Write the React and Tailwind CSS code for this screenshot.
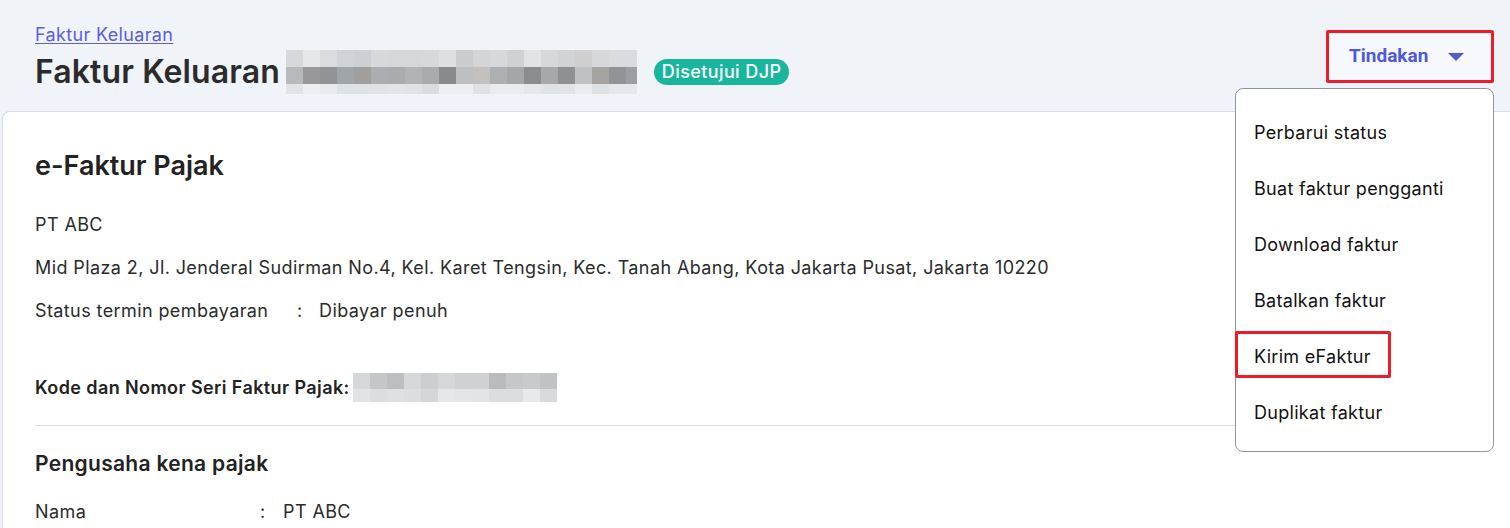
import React from "react";

const mosaicTop = ["#d6d9dc","#e5e7ea","#dadcdf","#cfd2d6","#cdd0d3","#d6d9dc","#d5d8db","#d5d8db","#d6d9dc","#dde0e2","#cbcccd","#d3d6d8","#d6d8db","#cfd2d5","#e1e3e6","#d6d9dc","#d1d4d7","#cfcfd0","#d6d8db","#d9dbde","#d9dbde"];
const mosaicMid = ["#b8b9bb","#98989a","#929394","#a0a5aa","#a19f9d","#abadb0","#a9abad","#b2b3b5","#a9abad","#888b8d","#bdbfc1","#c2c1bd","#adafb2","#a4a6a9","#8b8c8e","#a8a8a8","#8e9094","#bfc1c3","#a5a4a1","#919397","#9c9ea1"];
const mosaicBot = ["#e1e4e7","#eceef1","#e8eaed","#dfe2e5","#dfe2e5","#e0e3e6","#e2e5e8","#e0e3e6","#dadde0","#eceef1","#eceef1","#dfe2e5","#e9ebee","#e9ebee","#e5e8eb","#e0e3e6","#e1e4e7","#e9ebee","#dfe2e5","#e5e8eb","#e5e8eb"];

const kodeTop = ["#d6d7d9","#c4c6c8","#bcbec0","#d6d7d9","#cbcdcf","#d6d7d9","#d0d1d3","#d0d1d3","#b9bcbf","#c5c7c9","#c8cacc","#c0c2c4"];
const kodeBot = ["#e2e3e5","#dcdde0","#dfe0e2","#dcdde0","#d5d6d8","#e6e7e9","#e4e5e7","#e3e4e6","#dcdde0","#dcdde0","#e8e9eb","#d9dadc"];

function Row({ colors, h }) {
  return (
    <div className="flex">
      {colors.map((c, i) => (
        <div key={i} className="w-[17px] shrink-0" style={{ backgroundColor: c, height: h }} />
      ))}
    </div>
  );
}

const items = [
  "Perbarui status",
  "Buat faktur pengganti",
  "Download faktur",
  "Batalkan faktur",
  "Kirim eFaktur",
  "Duplikat faktur",
];

export default function App() {
  return (
    <div className="relative w-[1510px] h-[528px] overflow-hidden bg-[#f0f3f8] font-['Inter',sans-serif] text-[#2b2b2b]">
      {/* header */}
      <div className="flex justify-between items-start pl-[35px] pr-[16px] pt-[24px] h-[111px]">
        <div className="flex flex-col">
          <a className="text-[18px] leading-[22px] tracking-[0.35px] text-[#5a5ee0] underline underline-offset-2 decoration-1 w-fit">Faktur Keluaran</a>
          <div className="flex items-center mt-[3px]">
            <h1 className="text-[32px] leading-[46px] font-semibold text-[#2b2b2b] tracking-[0.1px]">Faktur Keluaran</h1>
            <div className="ml-[6px] w-[351px] overflow-hidden flex flex-col">
              <Row colors={mosaicTop} h={17} />
              <Row colors={mosaicMid} h={17} />
              <Row colors={mosaicBot} h={10} />
            </div>
            <span className="ml-[17px] h-[26px] px-[8px] rounded-full bg-[#17b69d] text-white text-[18px] tracking-[0.4px] leading-[26px] font-medium">Disetujui DJP</span>
          </div>
        </div>
        <button className="mt-[6px] w-[168px] h-[53px] border-[3px] border-[#ec1c2a] rounded-[2px] bg-[#f6f8fd] flex items-center justify-between pl-[20px] pr-[27px] text-[#4f5ad8] text-[19px] font-bold font-['Roboto',sans-serif]">
          <span>Tindakan</span>
          <svg width="16" height="8" viewBox="0 0 16 8"><path d="M0 0 L16 0 L8 8 Z" fill="#4f5ad8" /></svg>
        </button>
      </div>

      {/* card */}
      <div className="ml-[2px] h-[417px] rounded-tl-[8px] border-l border-t border-[#d7dbe3] bg-white pl-[32px] pr-[35px]">
        <h2 className="pt-[38px] text-[27px] leading-[32px] font-semibold text-[#222]">e-Faktur Pajak</h2>
        <div className="mt-[32px] text-[18px] tracking-[0.4px] leading-[22px] flex flex-col gap-[21px] text-[#2b2b2b]">
          <div>PT ABC</div>
          <div>Mid Plaza 2, Jl. Jenderal Sudirman No.4, Kel. Karet Tengsin, Kec. Tanah Abang, Kota Jakarta Pusat, Jakarta 10220</div>
          <div className="flex">
            <span className="w-[262px]">Status termin pembayaran</span>
            <span className="w-[22px]">:</span>
            <span>Dibayar penuh</span>
          </div>
        </div>
        <div className="mt-[51px] flex items-center">
          <span className="text-[18px] tracking-[0.4px] font-semibold text-[#222]">Kode dan Nomor Seri Faktur Pajak:</span>
          <div className="ml-[3px] flex flex-col">
            <Row colors={kodeTop} h={16} />
            <Row colors={kodeBot} h={13} />
          </div>
        </div>
        <div className="mt-[23px] h-px bg-[#d9dce3]" />
        <h3 className="mt-[25px] text-[21px] tracking-[0.3px] leading-[26px] font-semibold text-[#222]">Pengusaha kena pajak</h3>
        <div className="mt-[24px] flex text-[18px] tracking-[0.4px] leading-[22px]">
          <span className="w-[225px]">Nama</span>
          <span className="w-[23px]">:</span>
          <span>PT ABC</span>
        </div>
      </div>

      {/* dropdown */}
      <div className="absolute left-[1235px] top-[88px] w-[259px] h-[364px] rounded-[8px] border border-[#8f96a3] bg-white pt-[15px]">
        {items.map((t) => (
          <div key={t} className="relative h-[56px] flex items-center pl-[18px] text-[18px] tracking-[0.3px] text-[#111]">
            {t === "Kirim eFaktur" && (
              <div className="absolute left-[-1px] top-[3px] w-[156px] h-[47px] border-[3px] border-[#ec1c2a] rounded-[2px]" />
            )}
            <span>{t}</span>
          </div>
        ))}
      </div>
    </div>
  );
}
